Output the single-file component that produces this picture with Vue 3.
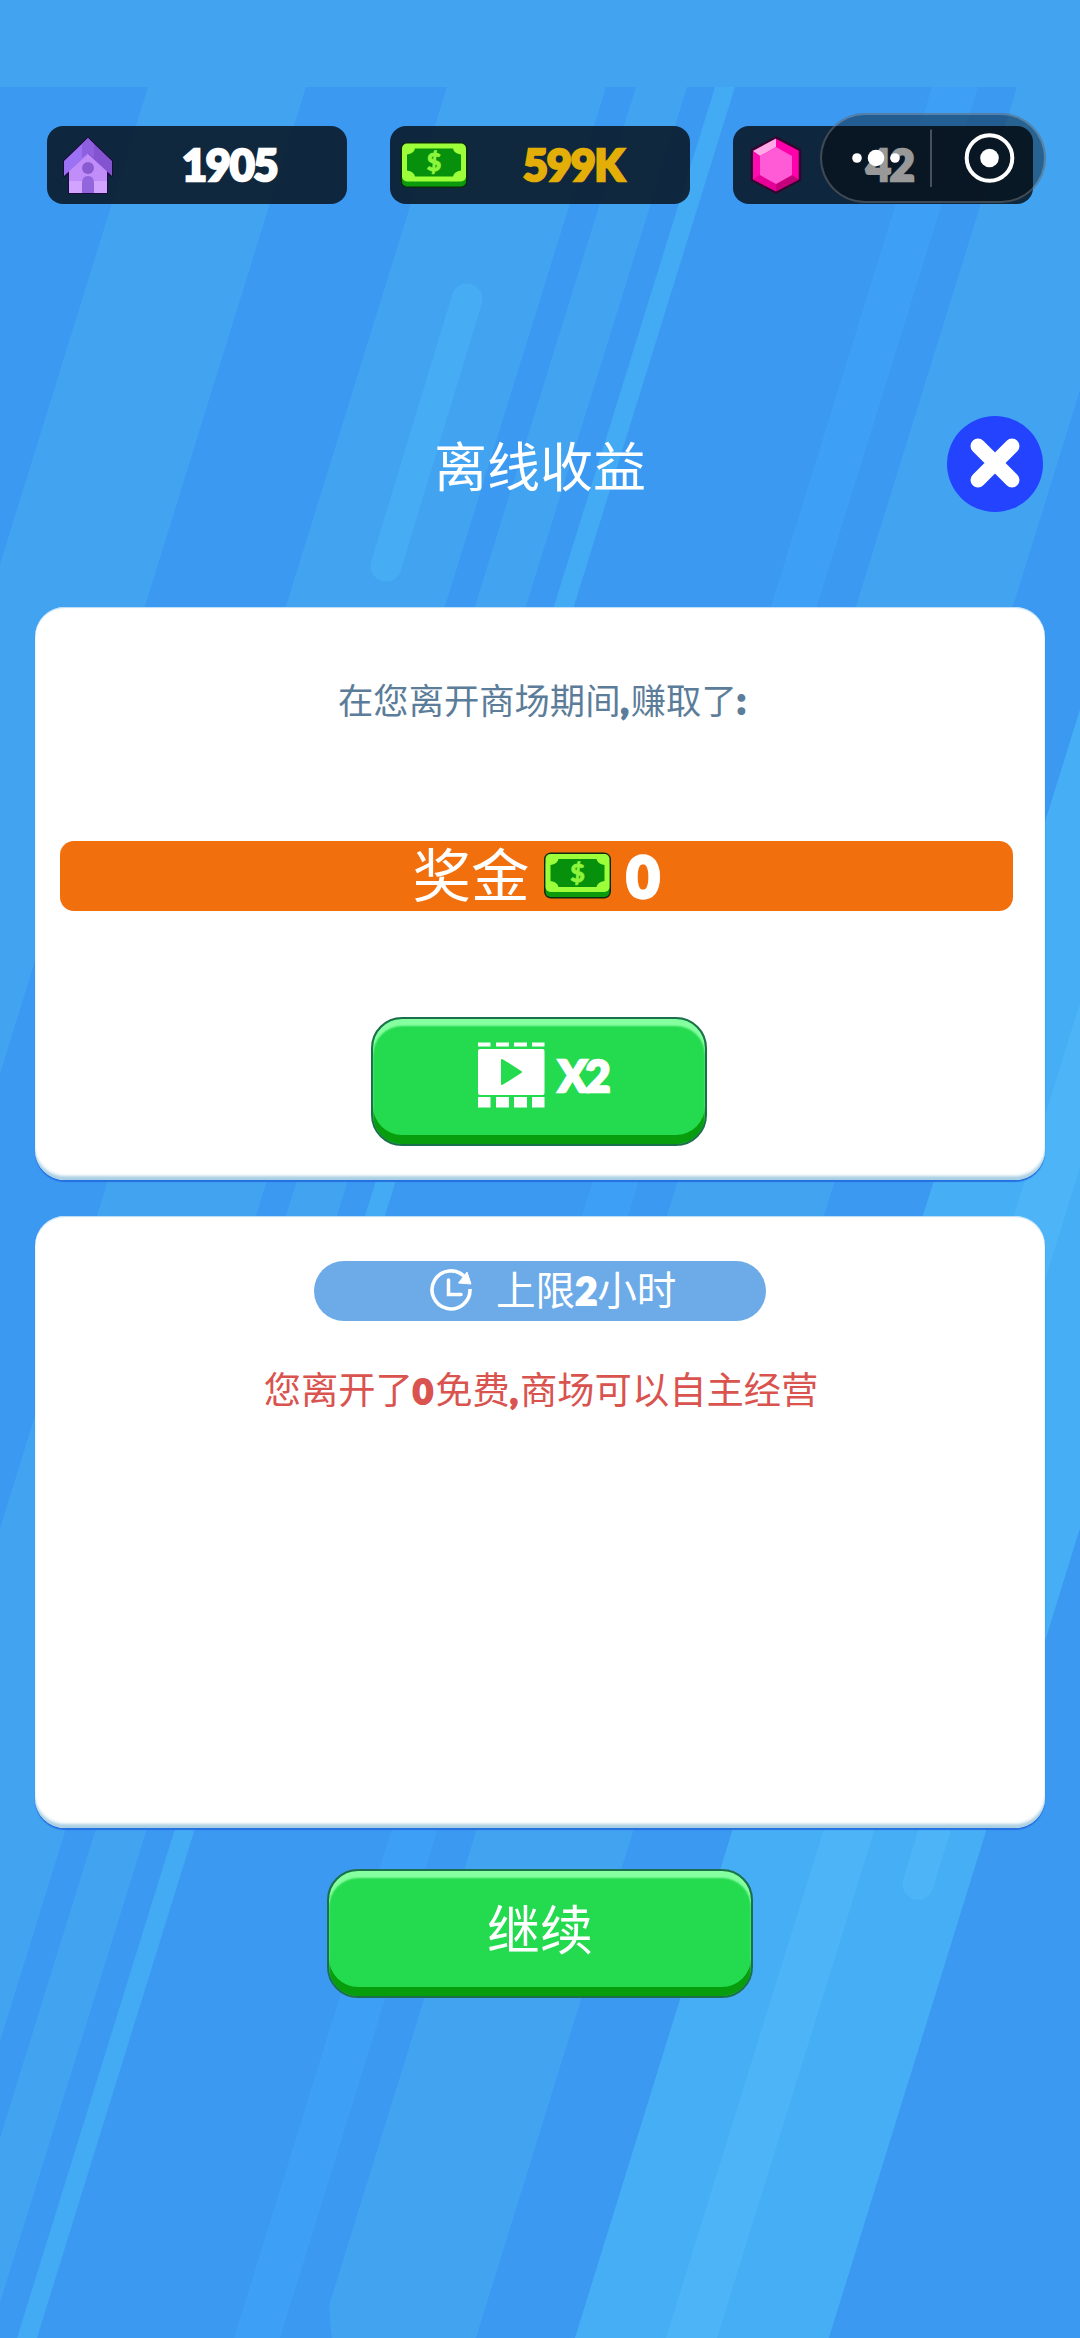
<script setup>
import { h } from 'vue'

// Each stripe: left and right x at the top edge of the field (y = 87)
const stripes = [
  { a: -300, b: 148, fill: '#3b99f1' },
  { a: 306, b: 447, fill: '#3b99f1' },
  { a: 606, b: 636, fill: '#3b99f1' },
  { a: 687, b: 1017, fill: '#3b99f1' },
  { a: 715, b: 735, fill: '#43aaf4' },
  { a: 932, b: 978, fill: '#3d9ff5' },
  { a: 1174, b: 1273, fill: '#3b99f1' },
  { a: 1273, b: 1527, fill: '#46aef4' },
  { a: 1364, b: 1415, fill: '#4db5f7' },
  { a: 1527, b: 2100, fill: '#3b99f1' },
]
const shift = 698
const poly = (s) => `${s.a},87 ${s.b},87 ${s.b - shift},2338 ${s.a - shift},2338`

const Bill = () =>
  h('svg', { viewBox: '0 0 68 47' }, [
    h('rect', { x: 0.5, y: 0.5, width: 67, height: 46, rx: 7, fill: '#0b2a10' }),
    h('rect', { x: 2, y: 8, width: 64, height: 37, rx: 5, fill: '#0a9a0c' }),
    h('rect', { x: 2, y: 2, width: 64, height: 38, rx: 5, fill: '#9dff3a' }),
    h('path', {
      d: 'M15 7H53Q54 12 61 13V29Q54 30 53 35H15Q14 30 7 29V13Q14 12 15 7Z',
      fill: '#07900b',
    }),
    h('text', {
      x: 34, y: 29.5, 'text-anchor': 'middle', 'font-family': 'Lato, sans-serif',
      'font-weight': 900, 'font-size': 25, fill: '#8df53c',
      stroke: '#8df53c', 'stroke-width': 0.8,
    }, '$'),
  ])
</script>

<template>
  <div class="screen">
    <svg class="backdrop" viewBox="0 0 1080 2338">
      <polygon v-for="(s, i) in stripes" :key="i" :points="poly(s)" :fill="s.fill" />
      <path d="M332 2338Q326 2300 334 2255Q341 2215 352 2180L300 2338Z" fill="#3b99f1" />
      <line x1="467" y1="299" x2="386" y2="566" stroke="#46adf4" stroke-width="31" stroke-linecap="round" />
      <line x1="1001" y1="1615" x2="918" y2="1884" stroke="#4db5f7" stroke-width="31" stroke-linecap="round" />
    </svg>

    <header class="stats">
      <div class="stat">
        <svg class="house" viewBox="0 0 50 57">
          <path d="M25 1L49 24V39L44 36V56H6V36L1 39V24Z" fill="#1c0a3c" stroke="#1c0a3c" stroke-width="2" stroke-linejoin="round" />
          <path d="M25 14L44 32V56H6V32Z" fill="#d2a4ff" />
          <path d="M25 14L44 32V44H6V32Z" fill="#c08df9" />
          <path d="M25 1L1 24V39L25 17Z" fill="#9c71f3" />
          <path d="M25 1L49 24V39L25 17Z" fill="#8453cf" />
          <path d="M25 1L31 7V21L25 16L19 21V7Z" fill="#8e5fdf" />
          <circle cx="25" cy="31" r="6" fill="#8a5bd0" />
          <path d="M19 56V46Q19 39 25 39T31 46V56Z" fill="#9265dc" />
        </svg>
        <b class="n1">1905</b>
      </div>
      <div class="stat">
        <Bill class="bill" />
        <b class="n2">599K</b>
      </div>
      <div class="stat">
        <svg class="gem" viewBox="0 0 52 58">
          <path d="M26 1.5L50 14V44L26 56.5L2 44V14Z" fill="#f0a" stroke="#33052e" stroke-width="2.5" stroke-linejoin="round" />
          <path d="M26 2.5L3 15L10 20L26 11Z" fill="#ffa9e8" />
          <path d="M3 15L10 20V39L3 43.5Z" fill="#fb0bb0" />
          <path d="M3 43.5L10 39L26 48V55.5Z" fill="#e60097" />
          <path d="M26 55.5V48L42 39L49 43.5Z" fill="#c4007c" />
          <path d="M26 11L42 20V39L26 48L10 39V20Z" fill="#ff5bd6" />
        </svg>
        <b class="n3">42</b>
      </div>
    </header>

    <div class="capsule">
      <svg viewBox="0 0 226 90">
        <circle cx="37" cy="45" r="4.8" fill="#fff" />
        <circle cx="56" cy="45" r="8.3" fill="#fff" />
        <circle cx="75" cy="45" r="4.8" fill="#fff" />
        <path d="M111 16.500V74" stroke="#fff" stroke-opacity=".25" stroke-width="2" />
        <circle cx="169.500" cy="45" r="22.800" fill="none" stroke="#fff" stroke-width="4" />
        <circle cx="169.500" cy="45" r="9.300" fill="#fff" />
      </svg>
    </div>

    <div class="heading">
      <h1>离线收益</h1>
      <button class="close">
        <svg viewBox="0 0 96 96">
          <path d="M31 30L65 64M65 30L31 64" stroke="#fff" stroke-width="15" stroke-linecap="round" />
        </svg>
      </button>
    </div>

    <section class="card first">
      <p class="lead">在您离开商场期间<b>,</b>赚取了<b>:</b></p>
      <div class="bonus">
        <span>奖金</span>
        <Bill class="bill" />
        <b>0</b>
      </div>
      <button class="green double">
        <svg class="film" viewBox="0 0 67 66">
          <path d="M0 .5H12.500V4.500H0ZM18 .5H31V4.500H18ZM36 .5H49V4.500H36ZM54 .5H66.500V4.500H54ZM0 55H12.500V65.500H0ZM18 55H31V65.500H18ZM36 55H49V65.500H36ZM54 55H66.500V65.500H54Z" fill="#fff" />
          <rect x="0" y="7" width="66.500" height="46" rx="2" fill="#fff" />
          <path d="M24 18L43 30L24 42Z" fill="#24da4e" stroke="#24da4e" stroke-width="2" stroke-linejoin="round" />
        </svg>
        <b>X2</b>
      </button>
    </section>

    <section class="card second">
      <div class="limit">
        <svg class="clock" viewBox="0 0 42 43">
          <path d="M35 8A19 19 0 1 0 40 20" fill="none" stroke="#fff" stroke-width="3.6" />
          <path d="M37 3L41 15L28.500 14Z" fill="#fff" stroke="#fff" stroke-width="1" />
          <path d="M18.500 11V25.500H31" fill="none" stroke="#fff" stroke-width="3.500" stroke-linecap="round" />
        </svg>
        <span>上限<b>2</b>小时</span>
      </div>
      <p class="away">您离开了<b>0</b>免费<b>,</b>商场可以自主经营</p>
    </section>

    <button class="green next">继续</button>
  </div>
</template>

<style>
body {
  margin: 0;
}
</style>

<style scoped>
.screen {
  position: relative;
  width: 1080px;
  height: 2338px;
  overflow: hidden;
  display: flex;
  flex-direction: column;
  align-items: center;
  box-sizing: border-box;
  padding-top: 126px;
  background: #42a3f1;
  color: #fff;
  font-family: "Noto Sans CJK SC", sans-serif;
}
.screen > * {
  position: relative;
  flex: none;
}
.screen > .backdrop {
  position: absolute;
  inset: 0;
  width: 1080px;
  height: 2338px;
}
svg {
  display: block;
}
h1,
p {
  margin: 0;
  font-weight: 400;
  white-space: nowrap;
}
button {
  border: 0;
  padding: 0;
  color: inherit;
  font: inherit;
}
b {
  font-family: Lato, sans-serif;
  font-weight: 900;
  -webkit-text-stroke: 2px currentColor;
}
.stats {
  display: flex;
  gap: 43px;
}
.stat {
  display: flex;
  align-items: center;
  width: 300px;
  height: 78px;
  border-radius: 16px;
  background: rgba(9, 23, 36, .88);
}
.stat b {
  font-size: 43px;
  line-height: 80px;
  letter-spacing: -1.1px;
  -webkit-text-stroke-width: 2.6px;
}
.house {
  width: 50px;
  height: 57px;
  margin-left: 16px;
}
.stat .bill {
  width: 68px;
  height: 48px;
  margin-left: 10px;
}
.gem {
  width: 52px;
  height: 58px;
  margin-left: 17px;
}
.n1 {
  margin-left: 69px;
}
.n2 {
  margin-left: 55px;
  color: #e3ae07;
}
.n3 {
  margin-left: 64px;
}
.screen > .capsule {
  position: absolute;
  left: 820px;
  top: 113px;
  width: 226px;
  height: 90px;
  box-sizing: border-box;
  border-radius: 45px;
  background: rgba(0, 0, 0, .4);
  box-shadow: inset 0 0 0 2px rgba(255, 255, 255, .22);
}
.heading {
  width: 1080px;
  height: 96px;
  margin-top: 212px;
  display: grid;
  grid-template-columns: 1fr auto 1fr;
  align-items: center;
}
h1 {
  grid-column: 2;
  font-size: 53px;
  line-height: 94px;
}
.close {
  justify-self: end;
  margin-right: 37.5px;
  width: 96px;
  height: 96px;
  border-radius: 50%;
  background: #2343ff;
}
.card {
  width: 1010px;
  box-sizing: border-box;
  display: flex;
  flex-direction: column;
  align-items: center;
  border-radius: 30px;
  background: #fff;
  box-shadow: inset 0 -5px 3px -1px #a9cfe3, inset 0 1px 1px #b9dcf8, 0 2px 1px #2470e2;
}
.first {
  height: 573px;
  margin-top: 95px;
  padding-top: 66px;
}
.lead {
  margin-left: 6px;
  font-size: 35.3px;
  line-height: 52px;
  color: #5c7d99;
}
.lead b {
  letter-spacing: 2px;
}
.bonus {
  width: 953px;
  height: 70px;
  margin: 114px 8px 0 0;
  display: flex;
  align-items: center;
  justify-content: center;
  border-radius: 14px;
  background: #f26f0d;
  font-size: 58.500px;
}
.bonus span {
  line-height: 62px;
  margin-top: -9px;
}
.bonus .bill {
  width: 69px;
  height: 47px;
  margin: -2px 14px 0 14px;
}
.bonus b {
  font-size: 57px;
  line-height: 66px;
  -webkit-text-stroke-width: 3.5px;
}
.green {
  display: flex;
  justify-content: center;
  box-sizing: border-box;
  height: 129px;
  border-radius: 31px;
  background: #24da4e;
  border: 2px solid #1c6f4c;
  box-shadow: inset 0 7px 2px #86ffa0, inset 0 -9px 0 #079d0c;
}
.double {
  width: 336px;
  margin: 106px 2px 0 0;
  padding: 23px 0 0 9px;
  gap: 13px;
}
.film {
  width: 67px;
  height: 66px;
}
.double b {
  font-size: 43px;
  line-height: 68px;
  letter-spacing: -1.5px;
  -webkit-text-stroke-width: 2.6px;
}
.second {
  height: 612px;
  margin-top: 36px;
  padding-top: 45px;
}
.limit {
  width: 452px;
  height: 60px;
  display: flex;
  align-items: center;
  box-sizing: border-box;
  padding-left: 116px;
  gap: 24px;
  border-radius: 30px;
  background: #6cabe8;
  font-size: 39.6px;
}
.limit span {
  line-height: 56px;
  margin-top: -4px;
}
.limit b {
  font-size: 38px;
}
.clock {
  width: 42px;
  height: 43px;
  margin-top: -2px;
}
.away {
  margin: 40px 0 0 2px;
  font-size: 37.3px;
  line-height: 54px;
  color: #d9534f;
}
.away b {
  font-size: 35px;
  letter-spacing: 2px;
}
.next {
  width: 426px;
  margin-top: 41px;
  font-size: 53px;
  line-height: 112px;
}
</style>
